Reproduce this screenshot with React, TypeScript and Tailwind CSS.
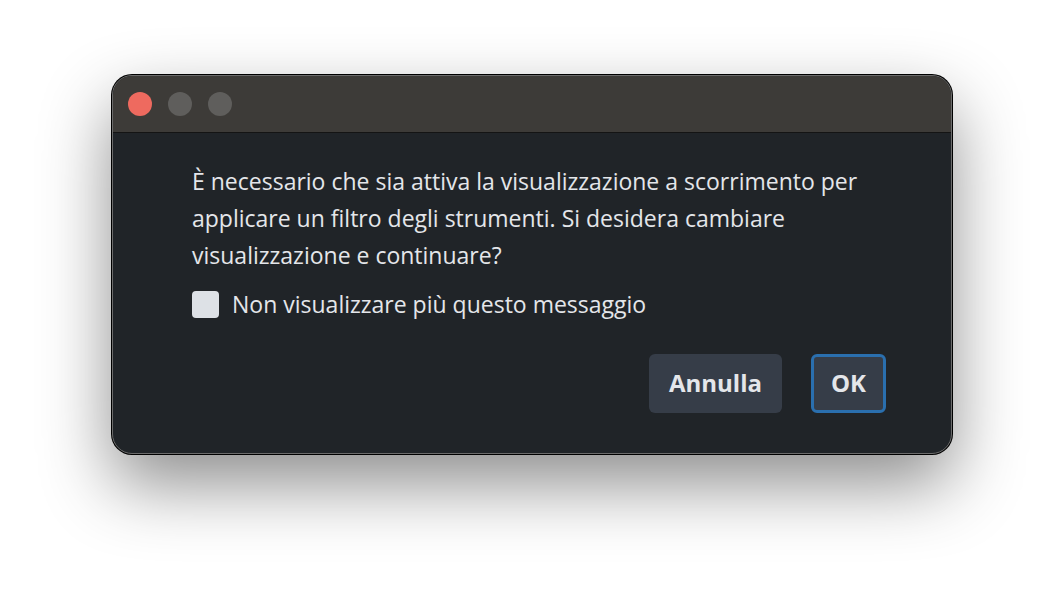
import React from "react";

const App: React.FC = () => {
  return (
    <div className="h-[602px] w-[1064px] bg-white pl-[112px] pt-[75px] font-['Open_Sans',sans-serif]">
      <div className="flex h-[379px] w-[840px] flex-col overflow-hidden rounded-[20px] border border-[#6b6b6b] bg-[#202428] shadow-[0_0_0_1px_#000,0_30px_70px_rgba(0,0,0,0.45)]">
        <div className="flex h-[57px] shrink-0 items-center gap-4 border-b border-[#141414] bg-[#3d3b38] pl-[15px]">
          <span className="h-6 w-6 rounded-full bg-[#ee6a5f]" />
          <span className="h-6 w-6 rounded-full bg-[#5f5e5c]" />
          <span className="h-6 w-6 rounded-full bg-[#5f5e5c]" />
        </div>
        <div className="flex flex-1 flex-col pl-[79px] pr-[65px] pt-[30px]">
          <p className="w-[700px] text-[23px] leading-[37px] text-[#e4e6ea]">
            È necessario che sia attiva la visualizzazione a scorrimento per applicare un filtro degli strumenti. Si desidera cambiare visualizzazione e continuare?
          </p>
          <label className="mt-[13px] flex items-center gap-[13px] text-[23px] text-[#e4e6ea]">
            <span className="h-[27px] w-[27px] rounded-[4px] bg-[#dde1e6]" />
            Non visualizzare più questo messaggio
          </label>
          <div className="mt-[32px] flex justify-end gap-[29px]">
            <button className="h-[59px] w-[133px] rounded-[6px] bg-[#363d48] text-[24px] font-bold text-[#e4e6ea]">
              Annulla
            </button>
            <button className="h-[59px] w-[75px] rounded-[6px] border-[3px] border-[#2a6fae] bg-[#363d48] text-[24px] font-bold text-[#e4e6ea]">
              OK
            </button>
          </div>
        </div>
      </div>
    </div>
  );
};

export default App;
